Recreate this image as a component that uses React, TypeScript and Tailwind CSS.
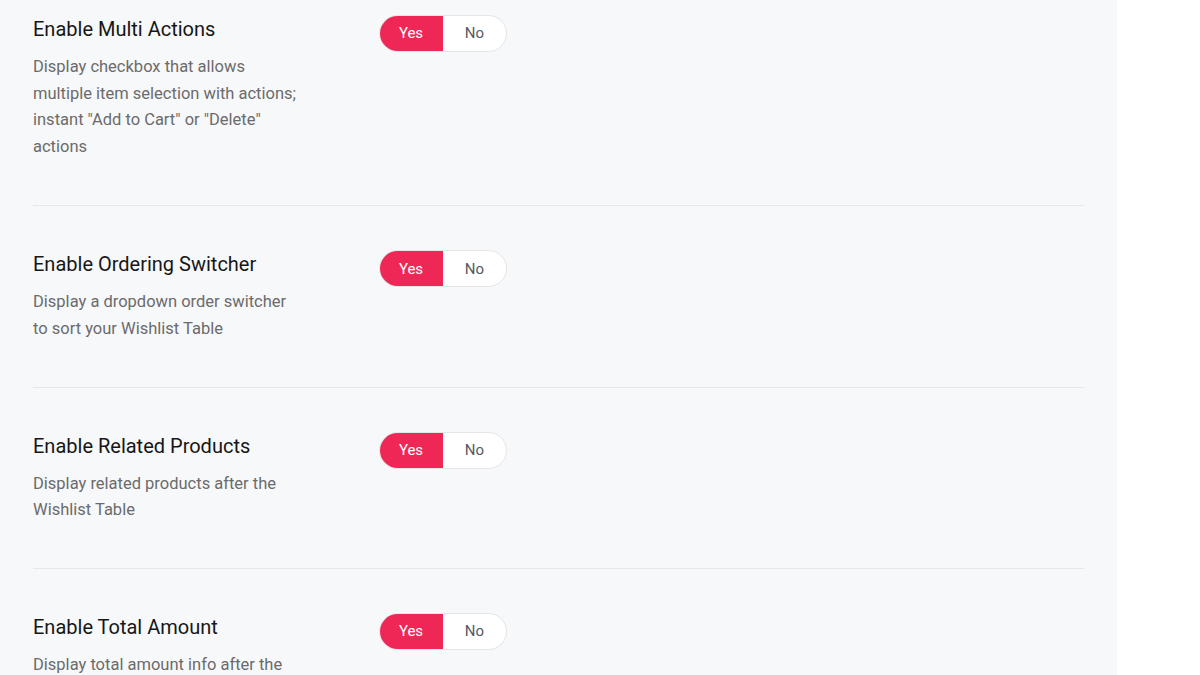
import React from "react";

const rows = [
  {
    title: "Enable Multi Actions",
    desc: 'Display checkbox that allows multiple item selection with actions; instant "Add to Cart" or "Delete" actions',
  },
  {
    title: "Enable Ordering Switcher",
    desc: "Display a dropdown order switcher to sort your Wishlist Table",
  },
  {
    title: "Enable Related Products",
    desc: "Display related products after the Wishlist Table",
  },
  {
    title: "Enable Total Amount",
    desc: "Display total amount info after the Wishlist Table",
  },
];

function Toggle() {
  return (
    <div className="flex h-[37px] w-[128px] overflow-hidden rounded-full border border-[#e4e5e8] bg-white text-[15px]">
      <div className="flex w-[64px] items-center justify-center bg-[#ef2756] text-white -ml-px -my-px h-[37px] rounded-l-full">
        Yes
      </div>
      <div className="flex flex-1 items-center justify-center text-[#555a63]">No</div>
    </div>
  );
}

export default function App() {
  return (
    <div
      className="flex h-[675px] w-[1200px] overflow-hidden bg-white"
      style={{ fontFamily: "Roboto, 'Noto Sans', sans-serif" }}
    >
      <div className="w-[1117px] shrink-0 bg-[#f7f8fa] pl-[33px] pr-[33px]">
        {rows.map((r, i) => (
          <div
            key={i}
            className={`flex ${i === 0 ? "pt-[15px] pb-[45px]" : "pt-[44px] pb-[44px]"} ${
              i < rows.length - 1 ? "border-b border-[#e7e8eb]" : ""
            }`}
          >
            <div className="w-[266px] shrink-0">
              <div className="mt-px text-[20px] font-normal leading-[26px] text-[#161616]">{r.title}</div>
              <div className="mt-[12px] text-[16.5px] leading-[26.6px] text-[#6b6b6b]">{r.desc}</div>
            </div>
            <div className="ml-[80px]">
              <Toggle />
            </div>
          </div>
        ))}
      </div>
    </div>
  );
}
